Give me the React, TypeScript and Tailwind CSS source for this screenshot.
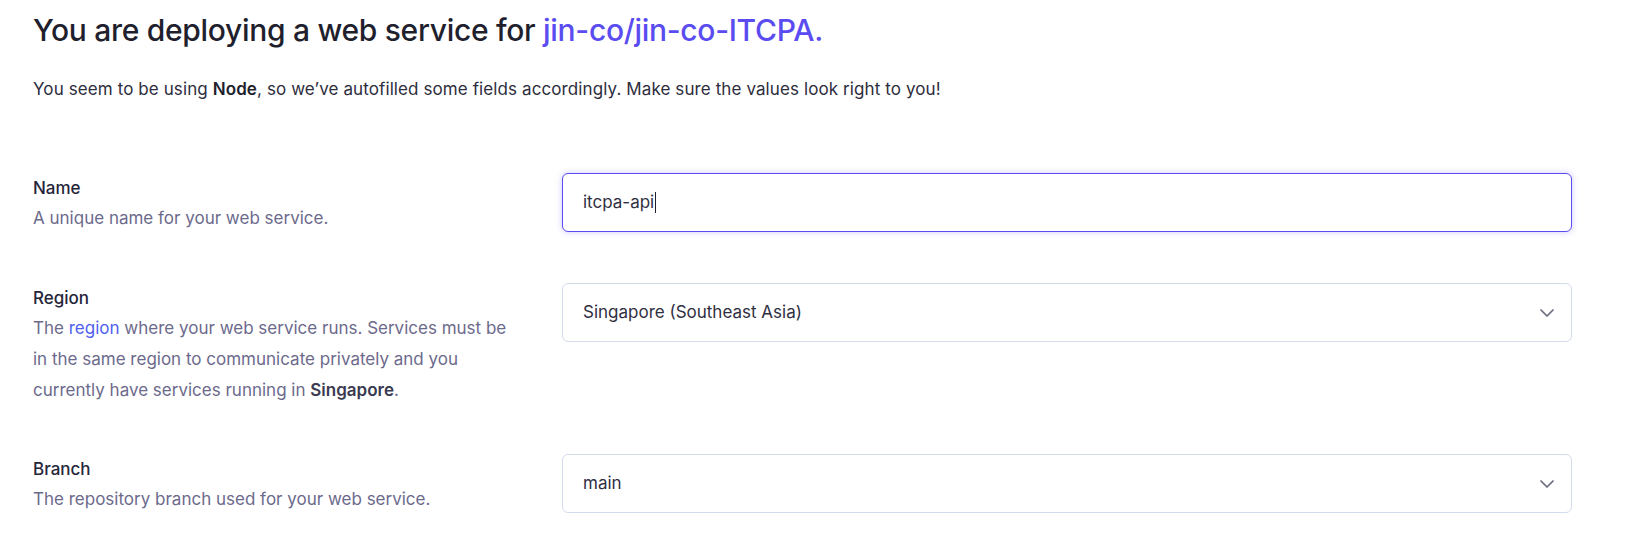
import { ChevronDown } from "lucide-react"

// New web service form: intro heading + label/field rows.

function FieldLabel({ title, children }: { title: string; children: React.ReactNode }) {
  return (
    <div className="w-[510px] shrink-0">
      <div className="text-[17px] leading-[30px] font-medium text-[#25253a]">{title}</div>
      <div className="text-[17px] leading-[31px] text-[#6c6a8c]">{children}</div>
    </div>
  )
}

function SelectBox({ value }: { value: string }) {
  return (
    <div className="flex h-[59px] flex-1 items-center justify-between rounded-[6px] border border-[#d3dbec] bg-white pl-[20px] pr-[12px]">
      <span className="text-[17px] text-[#2f2f3f]">{value}</span>
      <ChevronDown size={24} strokeWidth={1.75} className="text-[#6b6b80]" />
    </div>
  )
}

export default function App() {
  return (
    <div className="min-h-[541px] bg-white pl-[33px] pr-[64px] pt-[12px] font-['Inter',sans-serif] antialiased">
      <h1 className="text-[30px] leading-[36px] font-medium tracking-[-0.3px] text-[#1f1f2e]">
        You are deploying a web service for <span className="text-[#5a4cf0]">jin-co/jin-co-ITCPA.</span>
      </h1>
      <p className="mt-[29px] text-[17px] leading-[24px] tracking-[0.1px] text-[#2d2d3d]">
        You seem to be using <span className="font-semibold text-[#1f1f2e]">Node</span>, so we’ve autofilled some fields accordingly. Make sure the values look right to you!
      </p>

      <div className="mt-[72px] flex items-start">
        <FieldLabel title="Name">A unique name for your web service.</FieldLabel>
        <div className="ml-[19px] flex h-[59px] flex-1 items-center rounded-[6px] border border-[#5a4cf0] bg-white pl-[20px] shadow-[0_0_6px_rgba(90,76,240,0.3)]">
          <span className="text-[17px] text-[#2f2f3f]">itcpa-api</span>
          <span className="ml-[1px] h-[21px] w-[1px] bg-[#1f1f2e]" />
        </div>
      </div>

      <div className="mt-[49px] flex items-start">
        <FieldLabel title="Region">
          The <span className="text-[#4f5ff0]">region</span> where your web service runs. Services must be
          <br />
          in the same region to communicate privately and you
          <br />
          currently have services running in <span className="font-semibold text-[#3a3a50]">Singapore</span>.
        </FieldLabel>
        <div className="ml-[19px] flex flex-1">
          <SelectBox value="Singapore (Southeast Asia)" />
        </div>
      </div>

      <div className="mt-[48px] flex items-start">
        <FieldLabel title="Branch">The repository branch used for your web service.</FieldLabel>
        <div className="ml-[19px] flex flex-1">
          <SelectBox value="main" />
        </div>
      </div>
    </div>
  )
}
